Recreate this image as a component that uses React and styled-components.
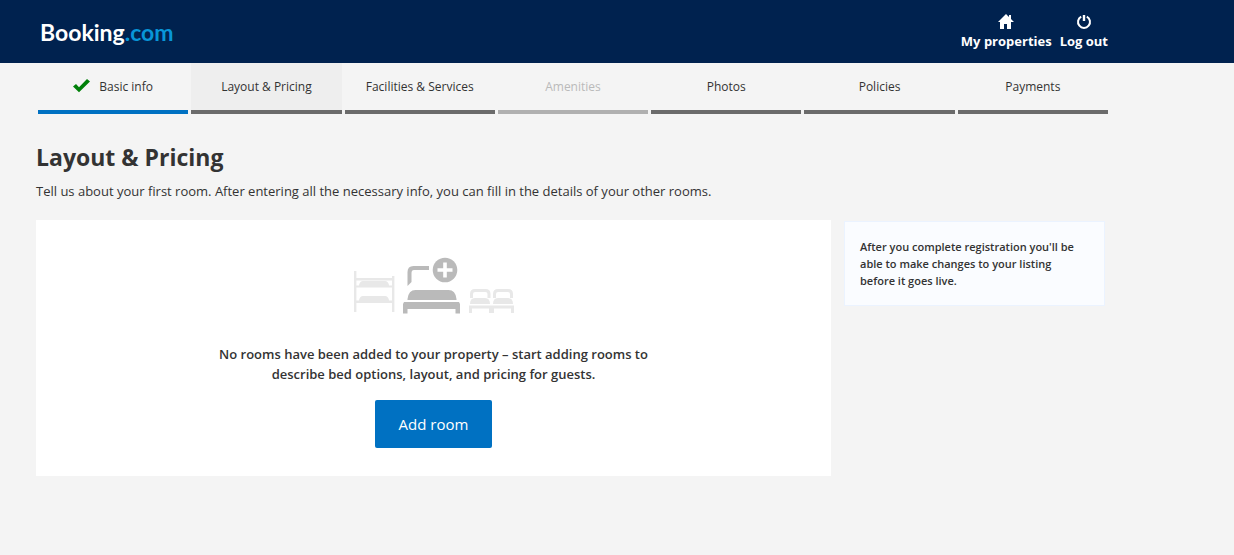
import React from "react";
import styled, { createGlobalStyle } from "styled-components";

const GlobalStyle = createGlobalStyle`
  * { box-sizing: border-box; }
  body {
    margin: 0;
    background: #f4f4f4;
    color: #333;
    font-family: "Open Sans", "Noto Sans", sans-serif;
    font-size: 13px;
    line-height: 20px;
  }
`;

const Header = styled.header`
  background: #00224f;
`;

const HeaderInner = styled.div`
  display: flex;
  align-items: center;
  justify-content: space-between;
  max-width: 1108px;
  height: 63px;
  padding-left: 40px;
`;

const Logo = styled.a`
  color: #fff;
  font-family: Lato, sans-serif;
  font-size: 23px;
  font-weight: 700;
  line-height: 28px;
  text-decoration: none;
`;

const LogoSuffix = styled.span`
  color: #0896d8;
`;

const HeaderLinks = styled.nav`
  display: flex;
  gap: 8px;
`;

const HeaderLink = styled.a`
  display: flex;
  flex-direction: column;
  align-items: center;
  gap: 1px;
  color: #fff;
  font-weight: 700;
  text-decoration: none;
  white-space: nowrap;
`;

const Steps = styled.nav`
  display: flex;
  gap: 3px;
  max-width: 1108px;
  padding-left: 38px;
`;

const stepBar = { done: "#0071c2", todo: "#6b6b6b", off: "#b0b0b0" };

const Step = styled.a`
  flex: 1 1 0;
  display: flex;
  justify-content: center;
  gap: 9px;
  height: 51px;
  padding-top: 14px;
  border-bottom: 4px solid ${(p) => stepBar[p.$state]};
  background: ${(p) => (p.$current ? "#eee" : "transparent")};
  color: ${(p) => (p.$state === "off" ? "#bababa" : "#333")};
  font-size: 12px;
  text-decoration: none;
  white-space: nowrap;
`;

const Main = styled.main`
  max-width: 1105px;
  padding: 27px 0 40px 36px;
`;

const Title = styled.h1`
  margin: 0;
  font-size: 23px;
  font-weight: 700;
  line-height: 32px;
`;

const Intro = styled.p`
  margin: 8px 0 19px;
`;

const Columns = styled.div`
  display: flex;
  align-items: flex-start;
  gap: 13px;
`;

const EmptyState = styled.section`
  flex: 1 1 0;
  display: flex;
  flex-direction: column;
  align-items: center;
  padding: 36px 16px 28px;
  background: #fff;
`;

const EmptyText = styled.p`
  max-width: 460px;
  margin: 28px 0 16px;
  font-weight: 600;
  text-align: center;
`;

const AddButton = styled.button`
  height: 48px;
  padding: 0 24px;
  border: 0;
  border-radius: 2px;
  background: #0071c2;
  color: #fff;
  font-family: inherit;
  font-size: 15px;
  line-height: 24px;
  cursor: pointer;
`;

const Note = styled.aside`
  flex: 0 0 261px;
  padding: 16px 15px;
  border: 1px solid #ebf3ff;
  background: #fafcff;
  margin-top: 1px;
  font-size: 11px;
  font-weight: 600;
  line-height: 17px;
`;

const HomeIcon = () => (
  <svg width="16" height="18" viewBox="0 0 16 18" aria-hidden="true">
    <path fill="#fff" d="M8 2 0 10h2v7h4v-5h3v5h4v-7h3l-3-3V3h-2v2z" />
  </svg>
);

const PowerIcon = () => (
  <svg width="16" height="18" viewBox="0 0 16 18" aria-hidden="true">
    <path fill="none" stroke="#fff" strokeWidth="2" d="M5.2 4.6a6 6 0 1 0 5.6 0" />
    <path stroke="#fff" strokeWidth="2.4" d="M8 3v6" />
  </svg>
);

const CheckIcon = () => (
  <svg width="17" height="18" viewBox="0 0 17 18" aria-hidden="true">
    <path fill="#008009" d="M0 9.6 3 7l3 3.2L14 2l3 2.6L6 15.2z" />
  </svg>
);

const BedsIllustration = () => (
  <svg width="162" height="60" viewBox="0 0 162 60" aria-hidden="true">
    <g fill="#e8e8e8">
      <path d="M1 15h2.4v7H39v-2h2.4v36H39v-9H3.400v9H1zM3.400 24.500v5H39v-5zM3.400 31.500v13H39v-13z" fillRule="evenodd" />
      <path d="M6 30v-1q1-4 4-4h22q3 0 4 4v1zM6 45v-1q1-4 4-4h22q3 0 4 4v1z" />
    </g>
    <g fill="#bababa">
      <path d="M54.500 30V16q0-6 6-6H76v4H61q-2.500 0-2.500 3v9z" />
      <path d="M54.500 44v-1q1-9 8-9h33q7 0 8 9v1zM51 46h55l1 2v9.500h-4.500V53h-48v4.500H50V48z" />
      <circle cx="92" cy="14" r="12.300" />
    </g>
    <path fill="#fff" d="M90.200 6.500h3.600v5.700h5.700v3.600h-5.700v5.700h-3.600v-5.700h-5.700v-3.600h5.700z" />
    <g fill="none" stroke="#e8e8e8" strokeWidth="3">
      <path d="M118.500 42v-4q0-3.500 3.500-3.500h10.500q3.500 0 3.500 3.500v4M141.500 42v-4q0-3.500 3.500-3.500h10q3.500 0 3.500 3.500v4" />
      <path d="M117.500 57v-6h20v6M139.500 57v-6h20v6" />
    </g>
    <path fill="#e8e8e8" d="M117 48q0-6 5-6h10q5 0 5 6zM140 48q0-6 5-6h10q5 0 5 6z" />
  </svg>
);

const steps = [
  { label: "Basic info", state: "done" },
  { label: "Layout & Pricing", state: "todo", current: true },
  { label: "Facilities & Services", state: "todo" },
  { label: "Amenities", state: "off" },
  { label: "Photos", state: "todo" },
  { label: "Policies", state: "todo" },
  { label: "Payments", state: "todo" },
];

export default function App() {
  return (
    <>
      <GlobalStyle />
      <Header>
        <HeaderInner>
          <Logo href="#">
            Booking<LogoSuffix>.com</LogoSuffix>
          </Logo>
          <HeaderLinks>
            <HeaderLink href="#"><HomeIcon />My properties</HeaderLink>
            <HeaderLink href="#"><PowerIcon />Log out</HeaderLink>
          </HeaderLinks>
        </HeaderInner>
      </Header>
      <Steps>
        {steps.map((s) => (
          <Step
            key={s.label}
            href="#"
            $state={s.state}
            $current={s.current}
            aria-current={s.current ? "step" : undefined}
            aria-disabled={s.state === "off" ? true : undefined}
          >
            {s.state === "done" && <CheckIcon />}
            {s.label}
          </Step>
        ))}
      </Steps>
      <Main>
        <Title>Layout &amp; Pricing</Title>
        <Intro>
          Tell us about your first room. After entering all the necessary info, you can fill in the
          details of your other rooms.
        </Intro>
        <Columns>
          <EmptyState>
            <BedsIllustration />
            <EmptyText>
              No rooms have been added to your property – start adding rooms to describe bed
              options, layout, and pricing for guests.
            </EmptyText>
            <AddButton type="button">Add room</AddButton>
          </EmptyState>
          <Note>
            After you complete registration you'll be able to make changes to your listing before
            it goes live.
          </Note>
        </Columns>
      </Main>
    </>
  );
}
